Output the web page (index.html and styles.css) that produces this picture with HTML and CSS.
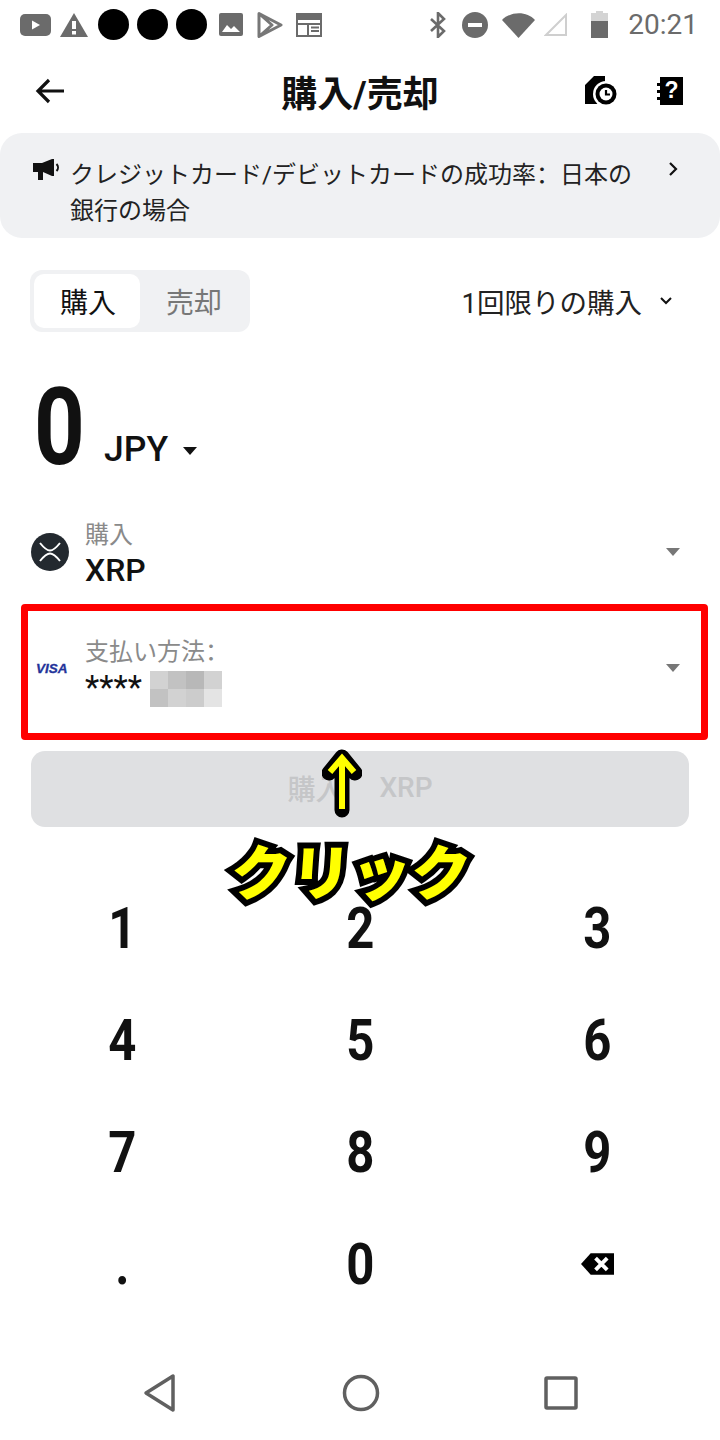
FILE: index.html
```html
<!DOCTYPE html>
<html lang="ja">
<head>
    <meta charset="UTF-8">
    <meta name="viewport" content="width=device-width, initial-scale=1.0">
    <title>購入/売却</title>
    <link rel="stylesheet" href="styles.css">
</head>
<body>
    <div class="page">
        <div class="status">
            <div class="status-left">
                <svg width="32" height="24" viewBox="0 0 32 24"><rect x="0" y="1" width="31" height="22" rx="5" fill="#6b6b6b"/><path d="M12 7.5l8 4.5-8 4.5z" fill="#fff"/></svg>
                <svg class="gap-warn" width="28" height="24" viewBox="0 0 28 24"><path d="M14 0L28 24H0z" fill="#6b6b6b"/><rect x="12" y="8" width="4" height="8" fill="#fff"/><rect x="12" y="18" width="4" height="3.5" fill="#fff"/></svg>
                <span class="dot dot-first"></span>
                <span class="dot"></span>
                <span class="dot"></span>
                <svg class="gap-img" width="24" height="24" viewBox="0 0 24 24"><rect width="24" height="23" y="0" rx="2" fill="#6b6b6b"/><path d="M3 19l5-7 4 4 3-3 6 6z" fill="#fff"/></svg>
                <svg class="gap-play" width="26" height="28" viewBox="0 0 26 28"><path d="M2 2.5l22 11.5L2 25.5zM2 2.5l13 11.5L2 25.5" fill="none" stroke="#777" stroke-width="3" stroke-linejoin="round"/></svg>
                <svg class="gap-news" width="26" height="25" viewBox="0 0 26 25"><rect x="1" y="2" width="24" height="22" fill="none" stroke="#6b6b6b" stroke-width="2"/><path d="M0 1l2 1 2-1 2 1 2-1 2 1 2-1 2 1 2-1 2 1 2-1 2 1 2-1v7H0z" fill="#6b6b6b"/><path d="M1 12h24M12 12v11M15 15.5h8M15 19h8" stroke="#6b6b6b" stroke-width="2"/></svg>
            </div>
            <div class="status-right">
                <svg width="18" height="26" viewBox="0 0 18 26"><path d="M2 7l13 12-6 6V1l6 6L2 19" fill="none" stroke="#6b6b6b" stroke-width="2.6"/></svg>
                <svg class="gap-dnd" width="26" height="26" viewBox="0 0 26 26"><circle cx="13" cy="13" r="13" fill="#6b6b6b"/><rect x="6" y="11" width="14" height="4" fill="#fff"/></svg>
                <svg class="gap-wifi" width="34" height="26" viewBox="0 0 34 26"><path d="M0 8C9-1 25-1 33 8L16.5 26z" fill="#6b6b6b"/></svg>
                <svg class="gap-signal" width="24" height="24" viewBox="0 0 24 24"><path d="M22 2v20H2z" fill="none" stroke="#cfcfcf" stroke-width="2"/></svg>
                <svg class="gap-batt" width="17" height="27" viewBox="0 0 17 27"><path d="M5 0h7v2h5v25H0V2h5z" fill="#d4d4d4"/><rect y="10" width="17" height="17" fill="#6b6b6b"/></svg>
                <span class="clock">20:21</span>
            </div>
        </div>

        <header class="topbar">
            <svg class="back" width="30" height="26" viewBox="0 0 30 26"><path d="M29 13H3M14 2L3 13l11 11" fill="none" stroke="#111" stroke-width="3.2"/></svg>
            <h1>購入/売却</h1>
            <div class="top-icons">
                <svg width="32" height="30" viewBox="0 0 32 30"><path d="M9 0h11v8H0V9zM0 8h14v20H0z" fill="#000"/><circle cx="21" cy="18" r="13" fill="#fff"/><circle cx="21" cy="18" r="10.5" fill="#000"/><circle cx="21" cy="18" r="6.5" fill="#fff"/><path d="M21 14v4.5h4" fill="none" stroke="#000" stroke-width="2.2"/></svg>
                <svg width="26" height="28" viewBox="0 0 26 28"><path d="M3 0h23v28H3v-5H0v-3h3v-4H0v-3h3V9H0V6h3z" fill="#000"/><text x="14.5" y="21" class="help-mark">?</text></svg>
            </div>
        </header>

        <div class="notice">
            <svg class="horn" width="26" height="22" viewBox="0 0 26 22"><path d="M0 4h9l10-4h2v17h-2l-9-4v8H5v-8H0z" fill="#111"/><path d="M23.5 5c2 2 2 5 0 7" fill="none" stroke="#111" stroke-width="2"/></svg>
            <p>クレジットカード/デビットカードの成功率<span class="colon" lang="zh-CN">：</span>日本の<br>銀行の場合</p>
            <svg class="notice-arrow" width="10" height="16" viewBox="0 0 10 16"><path d="M2 2l6 6-6 6" fill="none" stroke="#111" stroke-width="2.2"/></svg>
        </div>

        <div class="mode-row">
            <div class="tabs">
                <span class="tab tab-on">購入</span>
                <span class="tab">売却</span>
            </div>
            <div class="freq">
                1回限りの購入
                <svg width="14" height="10" viewBox="0 0 14 10"><path d="M2 2l5 5 5-5" fill="none" stroke="#111" stroke-width="2"/></svg>
            </div>
        </div>

        <div class="amount">
            <span class="amount-num">0</span>
            <span class="amount-cur">JPY</span>
            <span class="caret"></span>
        </div>

        <div class="pick">
            <svg class="xrp" width="38" height="38" viewBox="0 0 38 38"><circle cx="19" cy="19" r="19" fill="#23292f"/><path d="M9 10C13 15 16 17.5 19 17.5S25 15 29 10M9 28C13 23 16 20.5 19 20.5S25 23 29 28" fill="none" stroke="#fff" stroke-width="2"/></svg>
            <div class="pick-text">
                <span class="pick-label">購入</span>
                <span class="pick-value">XRP</span>
            </div>
            <span class="pick-caret"></span>
        </div>

        <div class="pick pick-pay">
            <span class="visa">VISA</span>
            <div class="pick-text">
                <span class="pick-label">支払い方法<span class="colon" lang="zh-CN">：</span></span>
                <span class="card-no">**** <span class="mosaic"><i class="m1"></i><i class="m2"></i><i class="m3"></i><i class="m1"></i><i class="m2"></i><i class="m1"></i><i class="m5"></i><i class="m4"></i></span></span>
            </div>
            <span class="pick-caret"></span>
            <div class="red-frame"></div>
        </div>

        <div class="buy-wrap">
            <button class="buy"><span>購入</span><span>XRP</span></button>
            <svg class="up-arrow" width="40" height="70" viewBox="0 0 40 70"><path d="M20 62V9M7 25L20 9l13 16" fill="none" stroke="#000" stroke-width="15" stroke-linecap="round" stroke-linejoin="round"/><path d="M20 61V10M8 24L20 10l12 14" fill="none" stroke="#ff0" stroke-width="6"/></svg>
            <div class="click-note">クリック</div>
        </div>

        <div class="keypad">
            <span class="key">1</span><span class="key">2</span><span class="key">3</span>
            <span class="key">4</span><span class="key">5</span><span class="key">6</span>
            <span class="key">7</span><span class="key">8</span><span class="key">9</span>
            <span class="key">.</span><span class="key">0</span>
            <span><svg width="33" height="24" viewBox="0 0 34 24"><path d="M10 1h24v22H10L0 12z" fill="#000"/><path d="M15 6l12 12M27 6L15 18" stroke="#fff" stroke-width="4"/></svg></span>
        </div>

        <div class="navbar">
            <svg width="36" height="40" viewBox="0 0 36 40"><path d="M31 3v34L4 20z" fill="none" stroke="#606060" stroke-width="3.5" stroke-linejoin="round"/></svg>
            <svg width="38" height="38" viewBox="0 0 38 38"><circle cx="19" cy="19" r="16.5" fill="none" stroke="#606060" stroke-width="3.5"/></svg>
            <svg width="34" height="34" viewBox="0 0 34 34"><rect x="2" y="2" width="30" height="30" rx="1" fill="none" stroke="#606060" stroke-width="3.5"/></svg>
        </div>
    </div>
</body>
</html>
```

FILE: styles.css
```css
* {
    box-sizing: border-box;
}
body {
    margin: 0;
    background: #fff;
    color: #111;
    font-family: Roboto, "Noto Sans CJK JP", sans-serif;
}
.page {
    width: 720px;
    height: 1440px;
    overflow: hidden;
}
.status {
    height: 48px;
    display: flex;
    justify-content: space-between;
    align-items: center;
    padding: 1px 22px 0 20px;
}
.status-left, .status-right {
    display: flex;
    align-items: center;
}
.dot {
    width: 31px;
    height: 31px;
    margin-left: 8px;
    border-radius: 50%;
    background: #000;
}
.gap-warn { margin-left: 8px; }
.dot-first { margin-left: 10px; }
.gap-img { margin-left: 12px; }
.gap-play { margin-left: 14px; }
.gap-news { margin-left: 13px; }
.gap-dnd { margin-left: 15px; }
.gap-wifi { margin-left: 14px; }
.gap-signal { margin-left: 8px; }
.gap-batt { margin-left: 23px; }
.clock {
    margin-left: 20px;
    font-size: 28px;
    color: #6b6b6b;
}
.topbar {
    height: 85px;
    display: flex;
    align-items: center;
    justify-content: space-between;
    padding: 0 36px 0 35px;
    position: relative;
}
.topbar h1 {
    position: absolute;
    left: 0;
    right: 0;
    margin: 0;
    text-align: center;
    font-size: 36px;
    font-weight: 700;
    color: #111;
}
.top-icons {
    display: flex;
    gap: 40px;
    align-items: center;
    margin-right: 1px;
}
.help-mark {
    font: 900 23px "Liberation Sans", sans-serif;
    fill: #fff;
    text-anchor: middle;
}
.notice {
    height: 105px;
    background: #f0f1f3;
    border-radius: 22px;
    display: flex;
    padding: 24px 42px 0 33px;
    position: relative;
}
.horn {
    flex: none;
    margin: 2px 11px 0 0;
}
.notice p {
    margin: 0;
    width: 580px;
    font-size: 24px;
    line-height: 36px;
    color: #222;
}
.colon {
    font-family: "Noto Sans CJK SC", sans-serif;
    line-height: 0;
}
.notice-arrow {
    margin: 4px 0 0 auto;
}
.mode-row {
    margin-top: 32px;
    padding: 0 47px 0 30px;
    display: flex;
    justify-content: space-between;
    align-items: center;
}
.tabs {
    width: 220px;
    height: 62px;
    background: #f0f1f3;
    border-radius: 12px;
    padding: 4px;
    display: flex;
}
.tab {
    width: 108px;
    padding-left: 2px;
    display: flex;
    align-items: center;
    justify-content: center;
    font-size: 28px;
    color: #777;
}
.tab-on {
    background: #fff;
    border-radius: 10px;
    color: #111;
}
.freq {
    display: flex;
    align-items: center;
    gap: 17px;
    font-size: 27.5px;
    color: #222;
}
.amount {
    height: 118px;
    margin-top: 32px;
    padding-left: 34px;
    display: flex;
    align-items: flex-end;
}
.amount-num {
    width: 51px;
    font: 700 108px/110px Roboto, sans-serif;
    transform: scaleX(0.82);
    transform-origin: left;
}
.amount-cur {
    margin-left: 19px;
    font-size: 35.5px;
    font-weight: 500;
    line-height: 46px;
    margin-bottom: 10px;
}
.caret {
    width: 0;
    height: 0;
    margin: 0 0 27px 15px;
    border-left: 7px solid transparent;
    border-right: 7px solid transparent;
    border-top: 8px solid #111;
}
.pick {
    height: 84px;
    margin-top: 28px;
    display: flex;
    align-items: center;
    padding: 0 40px 0 31px;
    position: relative;
}
.xrp {
    flex: none;
    margin-right: 16px;
}
.pick-text {
    margin-top: 4px;
    display: flex;
    flex-direction: column;
}
.pick-label {
    font-size: 24px;
    line-height: 32px;
    color: #8a8a8a;
}
.pick-value {
    font-size: 32px;
    line-height: 38px;
    font-weight: 500;
}
.pick-caret {
    width: 0;
    height: 0;
    margin-left: auto;
    border-left: 7px solid transparent;
    border-right: 7px solid transparent;
    border-top: 8px solid #777;
}
.pick-pay {
    margin-top: 32px;
    padding-left: 36px;
}
.visa {
    width: 30px;
    margin-right: 19px;
    font: italic 900 13.5px "Liberation Sans", sans-serif;
    -webkit-text-stroke: 0.3px #24339a;
    color: #24339a;
    flex: none;
}
.card-no {
    display: flex;
    align-items: flex-start;
    gap: 8px;
    font-size: 33px;
    line-height: 40px;
    height: 36px;
}
.mosaic {
    margin-top: 3px;
    display: grid;
    grid-template-columns: repeat(4, 18px);
    grid-auto-rows: 18px;
}
.mosaic i { display: block; }
.m1 { background: #d2d2d2; }
.m2 { background: #c2c2c2; }
.m3 { background: #b8b8b8; }
.m4 { background: #e4e4e4; }
.m5 { background: #cccccc; }
.red-frame {
    position: absolute;
    left: 21px;
    top: -22px;
    width: 687px;
    height: 136px;
    border: 7px solid #f00;
    border-radius: 4px;
}
.buy-wrap {
    margin-top: 41px;
    padding: 0 31px;
    position: relative;
}
.buy {
    width: 100%;
    height: 76px;
    padding: 0 0 3px;
    border: 0;
    border-radius: 14px;
    background: #dfe0e2;
    color: #c5c6c8;
    font-family: inherit;
    font-size: 28px;
    font-weight: 500;
    display: flex;
    justify-content: center;
    align-items: center;
    gap: 36px;
}
.up-arrow {
    position: absolute;
    left: 322px;
    top: -3px;
}
.click-note {
    position: absolute;
    left: 0;
    right: 18px;
    top: 79px;
    text-align: center;
    font-size: 60px;
    font-weight: 900;
    line-height: 90px;
    color: #ff0;
    -webkit-text-stroke: 12px #000;
    paint-order: stroke fill;
    stroke-linejoin: round;
    transform: skewX(-4deg);
}
.keypad {
    margin-top: 45px;
    padding: 0 4px;
    display: grid;
    grid-template-columns: repeat(3, 237.5px);
    grid-auto-rows: 112px;
    align-items: center;
    justify-items: center;
    font: 700 57px Roboto, sans-serif;
    color: #111;
}
.keypad span {
    display: flex;
}
.key {
    transform: scaleX(0.86);
}
.navbar {
    margin-top: 53px;
    padding: 0 142px;
    display: flex;
    justify-content: space-between;
    align-items: center;
}
```
